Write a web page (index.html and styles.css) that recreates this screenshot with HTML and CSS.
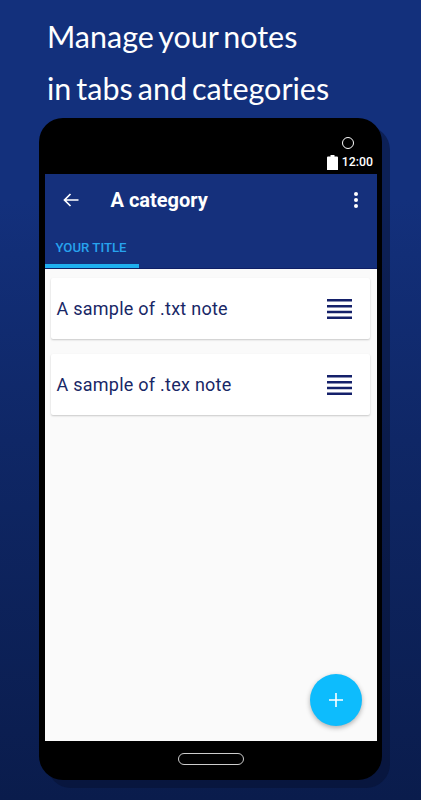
FILE: index.html
```html
<!DOCTYPE html>
<html lang="en">
<head>
<meta charset="utf-8">
<title>Manage your notes</title>
<link rel="stylesheet" href="styles.css">
</head>
<body>
<main class="page">
  <h1 class="headline"><span>Manage your notes</span><span>in tabs and categories</span></h1>
  <section class="phone">
    <div class="bezel-top">
      <span class="camera"></span>
      <div class="status">
        <svg class="battery" width="11" height="15" viewBox="0 0 11 15"><path d="M3.500 0h4v1.500H10a1 1 0 0 1 1 1V15H0V2.500a1 1 0 0 1 1-1h2.500z" fill="#fff"/></svg>
        <span class="clock">12:00</span>
      </div>
    </div>
    <div class="screen">
      <header class="appbar">
        <div class="toolbar">
          <svg class="back" width="16" height="14" viewBox="0 0 16 14"><path d="M15.500 7H1.500M7.500 1 1.500 7l6 6" fill="none" stroke="#fff" stroke-width="1.700"/></svg>
          <span class="title">A category</span>
          <svg class="more" width="4" height="16" viewBox="0 0 4 16"><circle cx="2" cy="2" r="2" fill="#fff"/><circle cx="2" cy="8" r="2" fill="#fff"/><circle cx="2" cy="14" r="2" fill="#fff"/></svg>
        </div>
        <div class="tabs"><div class="tab">YOUR TITLE</div></div>
      </header>
      <div class="content">
        <article class="note">
          <span class="note-name">A sample of .txt note</span>
          <svg class="lines" width="25" height="20" viewBox="0 0 25 20"><path d="M0 1.300h25M0 7.300h25M0 13.100h25M0 18.800h25" stroke="#14206a" stroke-width="2.500"/></svg>
        </article>
        <article class="note">
          <span class="note-name">A sample of .tex note</span>
          <svg class="lines" width="25" height="20" viewBox="0 0 25 20"><path d="M0 1.300h25M0 7.300h25M0 13.100h25M0 18.800h25" stroke="#14206a" stroke-width="2.500"/></svg>
        </article>
        <button class="fab" type="button" aria-label="Add">
          <svg width="14" height="14" viewBox="0 0 14 14"><path d="M7 0v14M0 7h14" stroke="#fff" stroke-width="1.600"/></svg>
        </button>
      </div>
    </div>
    <div class="bezel-bottom"><span class="home"></span></div>
  </section>
</main>
</body>
</html>
```
FILE: styles.css
```css
html, body { margin: 0; padding: 0; }
body { width: 421px; height: 800px; overflow: hidden; }
.page {
  width: 421px; height: 800px; box-sizing: border-box; overflow: hidden;
  padding: 10px 0 0 39px;
  background: linear-gradient(180deg, #13307c 0%, #13307c 25%, #0f2766 55%, #0a1c4c 100%);
  font-family: Roboto, sans-serif;
}
.headline {
  margin: 0 0 0 8px; font: 400 30.500px/52px Lato, sans-serif; color: #fff; word-spacing: -2.800px;
  display: flex; flex-direction: column; height: 108px;
}
.phone {
  width: 343px; height: 662px; background: #000; border-radius: 24px;
  box-shadow: 8px 8px 0 rgba(6, 16, 48, .5);
  display: flex; flex-direction: column; align-items: center;
}
.bezel-top {
  width: 100%; height: 56px; flex: none; box-sizing: border-box; padding: 19px 9px 0 0;
  display: flex; flex-direction: column; align-items: flex-end;
}
.camera { width: 10px; height: 10px; border: 1px solid #fff; border-radius: 50%; margin-right: 19px; }
.status { display: flex; align-items: center; gap: 4px; margin-top: 5px; height: 16px; }
.clock { color: #fff; font-size: 12.300px; font-weight: 500; }
.screen {
  width: 332px; flex: none; height: 567px; background: #fafafa;
  display: flex; flex-direction: column;
}
.appbar { background: #15307c; height: 95px; flex: none; display: flex; flex-direction: column; border-bottom: 1px solid #0f1f66; box-sizing: border-box; }
.toolbar { height: 52px; display: flex; align-items: center; padding: 0 19px 0 18px; flex: none; }
.title { color: #fff; font-size: 20px; font-weight: 700; margin-left: 32px; flex: 1; }
.tabs { flex: 1; display: flex; }
.tab {
  width: 94px; box-sizing: border-box; padding: 14px 0 0 11px;
  font-size: 13.200px; font-weight: 500; color: #27a3ee;
  border-bottom: 4px solid #1eb0f0;
}
.content {
  flex: 1; position: relative; padding: 9px 6.500px 0 6px;
  display: flex; flex-direction: column; gap: 15px;
}
.note {
  height: 61px; background: #fff; border-radius: 2px; flex: none;
  box-shadow: 0 1px 2px rgba(0,0,0,.2);
  display: flex; align-items: center; justify-content: space-between; padding: 0 18px 0 6px;
}
.note-name { color: #182766; font-size: 18px; letter-spacing: .25px; }
.lines { flex: none; }
.fab {
  position: absolute; right: 15px; bottom: 15px; width: 52px; height: 52px;
  border: 0; padding: 0; border-radius: 50%; background: #0dbcfd;
  box-shadow: 0 2px 5px rgba(0,0,0,.3);
  display: flex; align-items: center; justify-content: center;
}
.bezel-bottom { flex: 1; width: 100%; display: flex; align-items: center; justify-content: center; }
.home { width: 64px; height: 10px; border: 1px solid #ccc; border-radius: 6px; margin-top: -3px; }
```
